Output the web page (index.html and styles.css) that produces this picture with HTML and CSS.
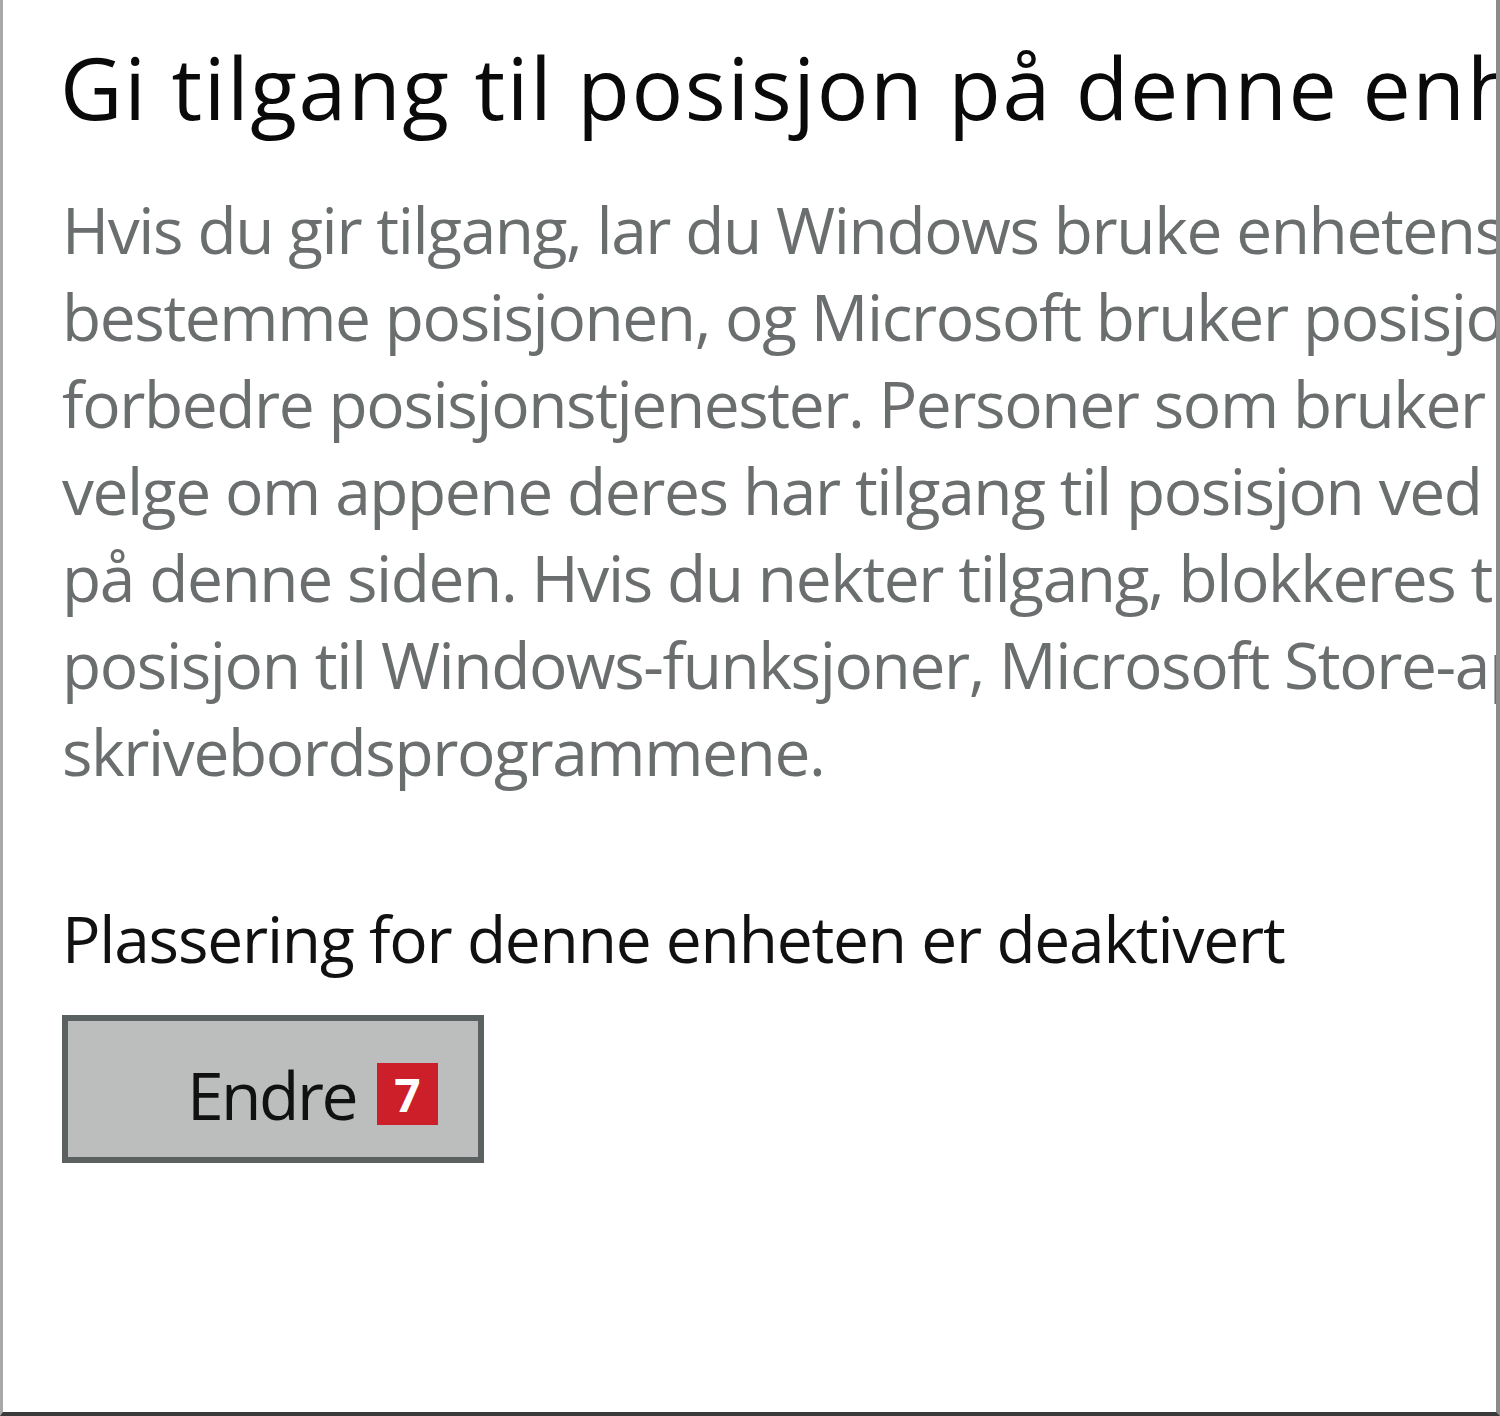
FILE: index.html
```
<!DOCTYPE html>
<html>
<head>
<meta charset="utf-8">
<title>Posisjon</title>
<link rel="stylesheet" href="styles.css">
</head>
<body>
<div class="frame">
    <h1 class="title">Gi tilgang til posisjon på denne enheten</h1>
    <p class="description">
        Hvis du gir tilgang, lar du Windows bruke enhetens funksjoner til å<br>
        bestemme posisjonen, og Microsoft bruker posisjonsdata til å<br>
        forbedre posisjonstjenester. Personer som bruker denne enheten, kan<br>
        velge om appene deres har tilgang til posisjon ved hjelp av innstillingene<br>
        på denne siden. Hvis du nekter tilgang, blokkeres tilgangen til<br>
        posisjon til Windows-funksjoner, Microsoft Store-apper og de fleste<br>
        skrivebordsprogrammene.
    </p>
    <div class="status">Plassering for denne enheten er deaktivert</div>
    <button class="change-btn">
        <span class="btn-label">Endre</span>
        <span class="step-badge">7</span>
    </button>
</div>
</body>
</html>
```

FILE: styles.css
```
body {
    margin: 0;
    padding: 0;
    background: #fff;
    font-family: "Open Sans", "Noto Sans", sans-serif;
    overflow: hidden;
}
.frame {
    width: 1500px;
    height: 1416px;
    box-sizing: border-box;
    border-left: 3px solid #a9a9a9;
    border-right: 4px solid #8a8a8a;
    border-bottom: 4px solid #3a3a3a;
    padding: 32px 0 0 57px;
    overflow: hidden;
    white-space: nowrap;
}
.title {
    margin: 0;
    font-size: 86px;
    font-weight: 400;
    line-height: 110px;
    color: #0a0a0a;
    letter-spacing: 1.6px;
}
.description {
    margin: 44px 0 0 2px;
    font-size: 64px;
    line-height: 87px;
    color: #6b6e6e;
    letter-spacing: -1.4px;
}
.status {
    margin: 100px 0 0 2px;
    font-size: 64px;
    line-height: 87px;
    color: #111;
    letter-spacing: -1.2px;
}
.change-btn {
    margin: 33px 0 0 2px;
    width: 422px;
    height: 148px;
    box-sizing: border-box;
    border: 6px solid #5b6161;
    background: #bcbebe;
    display: flex;
    align-items: center;
    justify-content: flex-end;
    gap: 21px;
    padding: 10px 40px 0 0;
    font-family: inherit;
}
.btn-label {
    font-size: 66px;
    color: #111;
    letter-spacing: -2.5px;
}
.step-badge {
    width: 61px;
    height: 62px;
    background: #cc1f2a;
    color: #fff;
    font-weight: 700;
    font-size: 46px;
    line-height: 62px;
    text-align: center;
}
```
